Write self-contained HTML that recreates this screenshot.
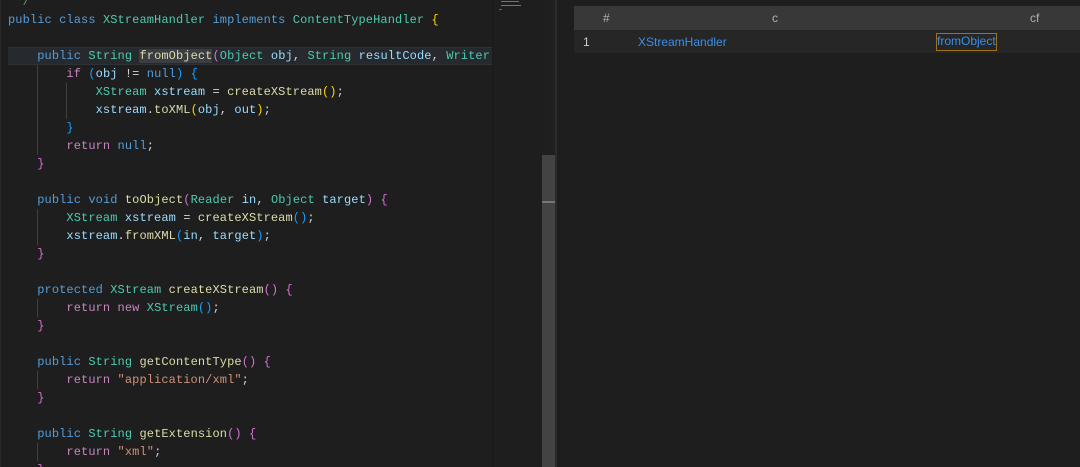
<!DOCTYPE html>
<html><head><meta charset="utf-8">
<style>
html,body{margin:0;padding:0;}
body{width:1080px;height:467px;background:#1e1e1e;position:relative;overflow:hidden;font-family:"Liberation Mono",monospace;}
#ed{position:absolute;left:0;top:0;width:492px;height:467px;background:#1e1e1e;overflow:hidden;border-left:1px solid #2a2a2a;box-sizing:border-box;}
.ln{position:absolute;left:7px;height:18px;line-height:18px;font-size:12px;letter-spacing:0.1px;white-space:pre;color:#d4d4d4;}
.cur{position:absolute;left:7px;width:490px;top:47px;height:18px;background:#262a2e;border-top:1px solid #2e3236;border-bottom:1px solid #2e3236;box-sizing:border-box;}
.k{color:#569cd6}.t{color:#4ec9b0}.m{color:#dcdcaa}.c{color:#c586c0}.s{color:#ce9178}.v{color:#9cdcfe}.g{color:#6a9955}
.b1{color:#ffd700}.b2{color:#da70d6}.b3{color:#179fff}
.sel{background:#3a3d41;}
.guide{position:absolute;width:1px;background:#404040;}
#mm{position:absolute;left:492px;top:0;width:50px;height:467px;background:#1e1e1e;border-left:1px solid #191919;box-sizing:border-box;}
#sb{position:absolute;left:542px;top:0;width:13px;height:467px;background:#1f1f1f;}
#thumb{position:absolute;left:542px;top:155px;width:13px;height:312px;background:#434343;}
#bd{position:absolute;left:555px;top:0;width:2px;height:467px;background:#2b2b2b;}
#rp{position:absolute;left:557px;top:0;width:523px;height:467px;background:#1e1e1e;font-family:"Liberation Sans",sans-serif;}
#hd{position:absolute;left:17px;top:6px;width:506px;height:24px;background:#383838;}
#row{position:absolute;left:17px;top:30px;width:506px;height:23px;background:#262626;}
.h{position:absolute;top:5px;font-size:12px;color:#b0b0b0;}
.r{position:absolute;top:5px;font-size:12px;}
</style></head><body>
<div id="ed">
<div class="cur"></div>
<div class="guide" style="left:36px;top:65px;height:90px"></div>
<div class="guide" style="left:65px;top:83px;height:36px"></div>
<div class="guide" style="left:36px;top:209px;height:36px"></div>
<div class="guide" style="left:36px;top:299px;height:18px"></div>
<div class="guide" style="left:36px;top:371px;height:18px"></div>
<div class="guide" style="left:36px;top:443px;height:18px"></div>
<div class="ln" style="top:-7px"><span class="g"> */</span></div>
<div class="ln" style="top:11px"><span class="k">public class</span> <span class="t">XStreamHandler</span> <span class="k">implements</span> <span class="t">ContentTypeHandler</span> <span class="b1">{</span></div>
<div class="ln" style="top:47px">    <span class="k">public</span> <span class="t">String</span> <span class="m sel">fromObject</span><span class="b2">(</span><span class="t">Object</span> <span class="v">obj</span>, <span class="t">String</span> <span class="v">resultCode</span>, <span class="t">Writer</span> <span class="v">out</span><span class="b2">)</span> <span class="b2">{</span></div>
<div class="ln" style="top:65px">        <span class="c">if</span> <span class="b3">(</span><span class="v">obj</span> != <span class="k">null</span><span class="b3">)</span> <span class="b3">{</span></div>
<div class="ln" style="top:83px">            <span class="t">XStream</span> <span class="v">xstream</span> = <span class="m">createXStream</span><span class="b1">()</span>;</div>
<div class="ln" style="top:101px">            <span class="v">xstream</span>.<span class="m">toXML</span><span class="b1">(</span><span class="v">obj</span>, <span class="v">out</span><span class="b1">)</span>;</div>
<div class="ln" style="top:119px">        <span class="b3">}</span></div>
<div class="ln" style="top:137px">        <span class="c">return</span> <span class="k">null</span>;</div>
<div class="ln" style="top:155px">    <span class="b2">}</span></div>
<div class="ln" style="top:191px">    <span class="k">public</span> <span class="k">void</span> <span class="m">toObject</span><span class="b2">(</span><span class="t">Reader</span> <span class="v">in</span>, <span class="t">Object</span> <span class="v">target</span><span class="b2">)</span> <span class="b2">{</span></div>
<div class="ln" style="top:209px">        <span class="t">XStream</span> <span class="v">xstream</span> = <span class="m">createXStream</span><span class="b3">()</span>;</div>
<div class="ln" style="top:227px">        <span class="v">xstream</span>.<span class="m">fromXML</span><span class="b3">(</span><span class="v">in</span>, <span class="v">target</span><span class="b3">)</span>;</div>
<div class="ln" style="top:245px">    <span class="b2">}</span></div>
<div class="ln" style="top:281px">    <span class="k">protected</span> <span class="t">XStream</span> <span class="m">createXStream</span><span class="b2">()</span> <span class="b2">{</span></div>
<div class="ln" style="top:299px">        <span class="c">return</span> <span class="c">new</span> <span class="t">XStream</span><span class="b3">()</span>;</div>
<div class="ln" style="top:317px">    <span class="b2">}</span></div>
<div class="ln" style="top:353px">    <span class="k">public</span> <span class="t">String</span> <span class="m">getContentType</span><span class="b2">()</span> <span class="b2">{</span></div>
<div class="ln" style="top:371px">        <span class="c">return</span> <span class="s">"application/xml"</span>;</div>
<div class="ln" style="top:389px">    <span class="b2">}</span></div>
<div class="ln" style="top:425px">    <span class="k">public</span> <span class="t">String</span> <span class="m">getExtension</span><span class="b2">()</span> <span class="b2">{</span></div>
<div class="ln" style="top:443px">        <span class="c">return</span> <span class="s">"xml"</span>;</div>
<div class="ln" style="top:461px">    <span class="b2">}</span></div>
</div>
<div id="mm">
<div style="position:absolute;left:8px;top:1px;width:18px;height:1px;background:#5a7a9a"></div>
<div style="position:absolute;left:8px;top:5px;width:20px;height:1px;background:#4a8a7a"></div>
<div style="position:absolute;left:6px;top:9px;width:3px;height:1px;background:#666"></div>
</div>
<div id="sb"></div>
<div id="thumb"><div style="position:absolute;left:0;top:46px;width:13px;height:2px;background:#777"></div></div>
<div id="bd"></div>
<div id="rp">
<div id="hd">
<span class="h" style="left:29px">#</span>
<span class="h" style="left:198px">c</span>
<span class="h" style="left:456px">cf</span>
</div>
<div id="row">
<span class="r" style="left:9px;color:#ccc">1</span>
<span class="r" style="left:64px;color:#3b8eea">XStreamHandler</span>
<span class="r" style="left:362px;top:3px;color:#3b8eea;border:1px solid #a0701a;padding:0 0 1px 0;line-height:15px">fromObject</span>
</div>
</div>
</body></html>
